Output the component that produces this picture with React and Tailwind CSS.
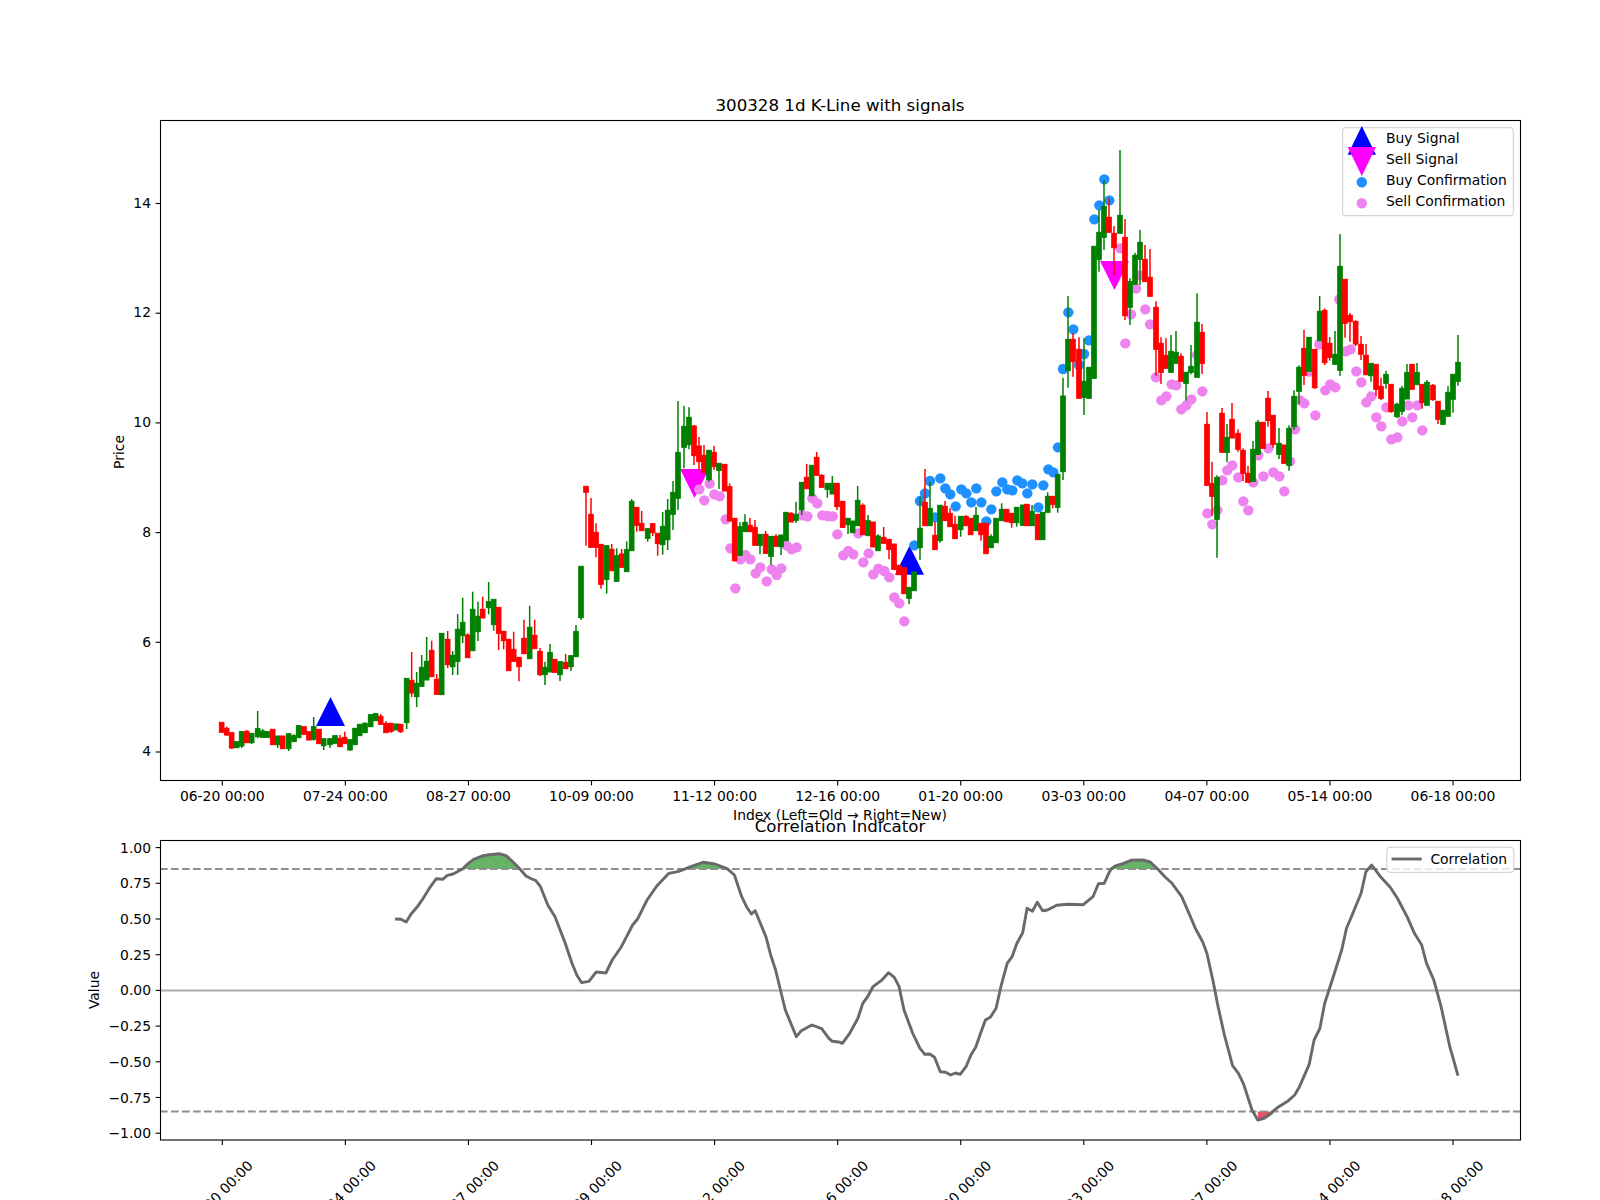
import React from 'react';

// candles read off the chart: [x, color, bodyTop, bodyBottom, wickTop, wickBottom]
const seg1 = [[215,'r',517,547],[230,'r',535,555,530,558],[245,'r',548,594,,597],[260,'g',575,593],[275,'g',545,588,,594],[290,'r',544,578,540],[305,'g',550,578,,582],[323,'g',536,560,483,565],[338,'g',543,562,537],[352,'g',545,562],[368,'r',538,584],[383,'g',558,584,,594],[398,'r',558,596],[416,'g',551,596,,603],[432,'g',557,575,553],[446,'g',527,563],[462,'r',530,553],[477,'r',545,570],[491,'g',530,568,501,572],[507,'r',538,581],[521,'g',566,587,,600],[540,'g',566,584,,594],[555,'g',557,580],[570,'r',565,590,555],[584,'r',562,581,545],[600,'g',569,600,,603],[615,'g',535,584],[629,'g',523,557],[645,'g',520,548,517],[662,'g',494,530],[677,'g',491,512,489],[692,'r',499,523,492],[708,'r',520,548,514],[723,'r',520,544,,548],[740,'g',522,540],[752,'r',523,545,,549],[770,'g',385,518,,537],[785,'r',391,429,306,441],[800,'g',400,440,366,471],[815,'g',352,409,315],[830,'g',334,390,261],[845,'r',301,380,272],[860,'r',388,433,372],[875,'g',250,434],[893,'r',268,344,243,354],[908,'g',316,350,303,375],[923,'g',238,334,192,375],[938,'g',217,257,143,279],[953,'r',255,323,250],[968,'g',178,302,125],[984,'g',199,245,155,273],[998,'r',178,204,140],[1016,'g',155,173,96,193],[1031,'g',148,224,,242],[1046,'r',172,250,,300],[1061,'r',244,272,,298],[1076,'r',268,362],[1091,'r',298,334,245],[1107,'r',322,350,,394],[1122,'r',265,311,209],[1139,'g',232,326,167],[1154,'r',256,296,209],[1170,'r',304,374,294,378],[1185,'g',352,374,335,405],[1200,'g',307,366,282],[1214,'r',328,367],[1230,'g',335,374,,393],[1247,'r',337,356,312],[1263,'g',317,350,,363],[1278,'g',244,320,225],[1293,'g',49,203,,210]];
const seg2 = [[78,'r',319,337,,497],[93,'r',403,502,354],[108,'r',457,502,430,532],[123,'r',493,613,,626],[140,'g',497,598,,641],[155,'r',508,572,492],[170,'g',527,604,505],[185,'r',522,562,507],[200,'g',509,575,484],[215,'g',364,512,357],[230,'r',382,436,,455],[245,'r',430,452,393],[263,'g',446,475,,485],[278,'r',431,458,,468],[293,'r',460,491,,527],[308,'g',439,494,396,524],[323,'g',391,479,357,510],[339,'g',337,403,303,450],[354,'g',217,355,63,390],[372,'g',139,202,78,265],[387,'g',112,194,82,208],[402,'r',138,227,135,255],[417,'r',198,245,171,270],[432,'r',226,278,195],[447,'g',211,299,,305],[462,'r',217,260,198,270],[477,'g',250,271,,327],[494,'r',253,333],[509,'r',320,423,310],[524,'r',415,542,,545],[540,'g',440,526,427],[555,'g',427,455,403],[570,'r',436,455,414],[585,'r',442,496,420],[600,'g',463,496,,523],[617,'r',463,520,453],[633,'g',469,529,,555],[648,'r',469,499,463],[663,'g',465,500,,525],[678,'g',397,482],[693,'r',400,426,397],[708,'g',403,421,366,429],[725,'g',307,390,,405],[740,'r',292,326,252],[755,'g',256,347],[770,'r',232,286,216],[785,'r',286,322,282],[802,'g',310,328,,353],[817,'g',310,342,288],[831,'r',310,380,,390],[848,'r',364,442],[864,'g',415,434,,462],[878,'g',423,458],[893,'g',361,437,318],[908,'r',376,464,370],[924,'g',422,467,405],[939,'r',426,501],[954,'g',468,512,463],[971,'r',472,490,441],[987,'r',478,508,,538],[1002,'r',492,568],[1017,'r',556,584],[1032,'r',563,641],[1047,'g',622,655,,672],[1062,'g',576,632]];
const seg3 = [[120,'g',1195,1253,1100,1290],[135,'r',1117,1187,1017],[150,'g',1135,1187,1055],[165,'r',1216,1259,1175],[180,'g',1126,1232,,1238],[195,'r',1129,1172,1113],[210,'r',1150,1190,1135],[225,'r',1183,1226,1157],[242,'g',1159,1199,,1220],[258,'r',1159,1187,1156],[272,'r',1165,1214],[288,'g',1156,1202,1130],[303,'r',1180,1214,,1232],[318,'r',1180,1271],[333,'g',1220,1253,1213],[348,'g',1165,1238],[365,'g',1138,1172,1120],[380,'r',1138,1175],[395,'r',1150,1178,,1193],[410,'g',1132,1178,,1190],[428,'g',1125,1186],[441,'r',1123,1187],[456,'g',1144,1187,1125],[473,'r',1153,1229],[488,'g',1147,1229],[503,'g',1099,1147,1087],[518,'r',1099,1123,,1135],[533,'g',1033,1132,,1148],[549,'g',798,1025,743,1050],[564,'g',628,722,498,773],[579,'r',628,695,610,740],[597,'r',658,805,622],[612,'g',754,802,625,855],[627,'g',712,805],[642,'g',349,745],[657,'g',307,389,240,425],[672,'g',229,322,150,360],[687,'r',262,307,205],[702,'r',310,353,288,438],[720,'g',256,310,60],[735,'r',322,557,267,570],[750,'g',455,532,445,585],[765,'g',376,463,368],[780,'g',337,388,300,465],[795,'r',388,455,345],[810,'r',442,499,357],[828,'r',532,658,514,737],[843,'r',640,727,622,762],[858,'r',676,715,625],[873,'g',664,727,615],[888,'g',667,700,603],[903,'r',679,754,670],[918,'g',727,760,,812],[933,'g',709,727,645,733],[951,'g',577,742,490],[966,'r',607,700,582,732]];
const seg4 = [[81,'r',613,796,576],[96,'r',790,829,726,888],[111,'g',772,898,766,1013],[126,'r',580,697,564],[141,'g',652,697,612,727],[156,'r',598,654,549],[174,'r',640,688,628,695],[189,'r',691,760,685,783],[204,'r',760,787,738],[219,'g',688,784,663],[234,'g',607,703,600],[249,'r',607,685],[264,'r',535,602,513,620],[279,'r',586,673,,683],[297,'g',670,703,624,717],[312,'r',675,730],[327,'g',625,736,616,752],[342,'g',529,620,511,630],[357,'g',442,514,436,552],[372,'r',385,466,330,495],[387,'g',352,454],[404,'r',388,503,,507],[419,'g',274,362,228],[434,'r',271,428,265,435],[449,'r',370,412,351,422],[465,'g',403,433,333],[480,'g',139,451,42,467],[495,'r',178,310,,353],[510,'r',286,305,279,365],[527,'r',304,372,301,378],[543,'r',373,403,348,420],[558,'r',406,464,372],[573,'g',430,467,,485],[588,'r',433,508,,527],[603,'r',499,535,473,540],[618,'g',463,490,452,506],[633,'r',493,575,,578],[651,'g',553,590,548,594],[666,'g',505,574,498,585],[681,'g',457,537,432],[696,'r',433,508,432],[711,'g',457,494,429],[726,'r',493,548,,566],[741,'g',487,556,480],[759,'r',496,539,492,542],[774,'r',544,598,,612],[789,'g',571,613],[804,'g',517,589,498],[819,'g',463,538,,578],[834,'g',427,484,345,497]];

const place = (rows, ox, oy) => rows.map(([x, c, t, b, hi = t, lo = b]) => ({ x: ox + x / 3, c, t: oy + t / 3, b: oy + b / 3, hi: oy + hi / 3, lo: oy + lo / 3 }));
const candles = [...place(seg1, 150, 550), ...place(seg2, 560, 380), ...place(seg3, 880, 130), ...place(seg4, 1180, 220)];

const dots = (pts, ox, oy) => pts.map(([x, y]) => [ox + x / 3, oy + y / 3]);
const sellDots = [
  ...dots([[418,328],[449,311],[433,361],[463,343],[479,349],[497,418],[511,505],[526,625],[541,538],[556,525],[571,538],[587,580],[601,562],[620,604],[635,568],[650,585],[664,565],[680,496],[695,508],[710,502],[727,406],[742,409],[757,355],[772,370],[787,406],[803,408],[818,409],[832,463],[850,526],[865,513],[880,523],[895,460],[910,547],[926,520],[940,583],[955,566],[973,573],[988,592],[1003,652],[1018,670],[1033,724]], 560, 380),
  ...dots([[721,355],[768,476],[780,436],[753,553],[736,640],[796,538],[810,583],[828,742],[875,763],[889,766],[844,811],[859,799],[904,838],[919,826],[934,808],[967,784],[951,675]], 880, 130),
  ...dots([[82,880],[97,913],[112,871],[127,781],[142,751],[157,736],[175,772],[190,844],[205,871],[220,787],[235,706],[250,769],[265,685],[280,757],[298,769],[313,814],[330,724],[345,628],[360,541],[373,550],[388,455],[406,586],[418,373],[436,511],[451,493],[466,502],[478,238],[497,394],[512,388],[529,454],[544,487],[559,547],[574,529],[589,592],[604,619],[619,562],[634,658],[652,652],[667,604],[685,556],[697,592],[712,556],[727,631]], 1180, 220),
];
const buyDots = dots([[103,1246],[120,1113],[135,1090],[150,1053],[165,1162],[181,1045],[196,1075],[211,1093],[227,1129],[244,1078],[259,1090],[274,1117],[289,1075],[304,1117],[319,1174],[334,1138],[349,1084],[367,1057],[382,1078],[397,1081],[412,1051],[427,1060],[442,1090],[457,1063],[475,1132],[490,1066],[505,1018],[520,1027],[534,952],[549,717],[565,547],[580,598],[597,705],[612,672],[627,631],[658,226],[643,268],[673,148],[688,211]], 880, 130);

const corrA = [[650,387],[662,388],[673,396],[683,372],[695,352],[708,325],[722,292],[735,266],[748,268],[758,256],[770,252],[785,240],[790,236],[798,224],[812,208],[832,197],[845,194],[865,191],[880,198],[895,218],[907,236],[920,258],[932,267],[940,271],[950,290],[965,345],[980,380],[1000,455],[1015,520],[1025,555],[1035,578],[1050,574],[1065,546],[1085,549],[1098,510],[1117,470],[1140,405],[1150,388],[1170,330],[1190,288],[1215,250],[1235,244],[1250,236],[1260,230],[1285,217],[1310,222],[1335,236],[1350,255],[1365,320],[1375,350],[1385,372],[1393,362],[1415,440],[1425,495],[1435,540],[1455,660],[1478,740],[1488,722],[1510,705],[1530,716],[1545,745],[1552,754],[1568,757]];
const corrB = [[5,760],[20,730],[37,685],[47,640],[57,620],[68,590],[85,572],[100,548],[112,562],[122,590],[132,660],[150,730],[165,775],[175,793],[185,792],[195,802],[207,845],[218,847],[228,855],[238,849],[248,853],[260,830],[270,795],[280,772],[290,730],[300,690],[310,682],[322,655],[332,590],[345,520],[355,500],[365,460],[377,428],[386,355],[397,364],[407,337],[418,362],[428,360],[447,346],[470,343],[502,344],[522,320],[533,281],[545,280],[556,245],[560,236],[568,228],[585,220],[600,211],[625,210],[640,216],[655,236],[670,260],[685,280],[705,320],[720,370],[733,415],[748,455],[757,490],[770,575],[780,650],[793,735],[810,827],[822,850],[832,880],[850,960],[862,990],[875,985],[890,970],[893,964],[905,950],[925,932],[938,915],[948,890],[968,823],[978,750],[990,715],[1000,640],[1020,550],[1035,480],[1045,415],[1055,380],[1075,310],[1085,245],[1097,225],[1115,260],[1135,292],[1150,325],[1170,380],[1185,430],[1200,465],[1210,520],[1225,570],[1240,650],[1258,770],[1275,857]];
const toPx = (rows, ox) => rows.map(([x, y]) => [ox + x / 2.063, 790 + y / 3]);
const corr = [...toPx(corrA, 80), ...toPx(corrB, 840)];

const UPPER = 869;
const LOWER = 1111.5;

const pointStr = (pts) => pts.map(([x, y]) => `${x.toFixed(1)},${y.toFixed(1)}`).join(' ');

const runs = (test) => {
  const out = [];
  let cur = [];
  corr.forEach((p) => {
    if (test(p[1])) cur.push(p);
    else if (cur.length) { out.push(cur); cur = []; }
  });
  if (cur.length) out.push(cur);
  return out;
};

const tickX = (i) => 222.3 + 123.07 * i;
const dates = ['06-20', '07-24', '08-27', '10-09', '11-12', '12-16', '01-20', '03-03', '04-07', '05-14', '06-18'];
const prices = [4, 6, 8, 10, 12, 14];
const values = [['1.00', 1], ['0.75', 0.75], ['0.50', 0.5], ['0.25', 0.25], ['0.00', 0], ['−0.25', -0.25], ['−0.50', -0.5], ['−0.75', -0.75], ['−1.00', -1]];
const priceY = (p) => 752 - (p - 4) * 54.85;
const valueY = (v) => 990.4 - v * 142.8;

const Candles = () => candles.map((k, i) => {
  const color = k.c === 'r' ? 'fill-[#ff0000] stroke-[#ff0000]' : 'fill-[#008000] stroke-[#008000]';
  return (
    <g key={i} className={color}>
      <line x1={k.x} x2={k.x} y1={k.hi} y2={k.lo} strokeWidth="1.5" />
      <rect x={k.x - 2.3} y={k.t} width="4.6" height={k.b - k.t} strokeWidth="1" />
    </g>
  );
});

const Frame = ({ x, y, w, h }) => <rect x={x} y={y} width={w} height={h} fill="none" className="stroke-black" strokeWidth="1.1" />;

const PriceChart = () => (
  <svg viewBox="0 120 1600 697" className="block w-[1600px] h-[697px] overflow-visible text-[13.9px] fill-black">
    <polygon points="316,726 345,726 330.5,697" className="fill-[#0000ff]" />
    <polygon points="895,574.7 924,574.7 909.5,545.7" className="fill-[#0000ff]" />
    <polygon points="680,469 709,469 694.5,498" className="fill-[#ff00ff]" />
    <polygon points="1100,261 1129,261 1114.5,290" className="fill-[#ff00ff]" />
    {buyDots.map(([x, y], i) => <circle key={i} cx={x} cy={y} r="5.2" className="fill-[#1e90ff]" />)}
    {sellDots.map(([x, y], i) => <circle key={i} cx={x} cy={y} r="5.2" className="fill-[#ee82ee]" />)}
    <Candles />

    <Frame x={160.5} y={120.5} w={1360} h={660} />
    {dates.map((d, i) => (
      <g key={d}>
        <line x1={tickX(i)} x2={tickX(i)} y1="780.5" y2="785.4" className="stroke-black" strokeWidth="1.1" />
        <text x={tickX(i)} y="801" textAnchor="middle">{d} 00:00</text>
      </g>
    ))}
    {prices.map((p) => (
      <g key={p}>
        <line x1="155.6" x2="160.5" y1={priceY(p)} y2={priceY(p)} className="stroke-black" strokeWidth="1.1" />
        <text x="151" y={priceY(p) + 4.2} textAnchor="end">{p}</text>
      </g>
    ))}
    <text x="840" y="820" textAnchor="middle">Index (Left=Old → Right=New)</text>
    <text transform="translate(124 452) rotate(-90)" textAnchor="middle">Price</text>

    <rect x="1342.7" y="127.7" width="170.6" height="88" rx="3" strokeWidth="1" className="fill-white/80 stroke-[#cccccc]" />
    <polygon points="1347.7,154.7 1376,154.7 1361.8,126" className="fill-[#0000ff]" />
    <polygon points="1347.7,147 1376,147 1361.8,176" className="fill-[#ff00ff]" />
    <circle cx="1361.8" cy="182.3" r="5.2" className="fill-[#1e90ff]" />
    <circle cx="1361.8" cy="203.3" r="5.2" className="fill-[#ee82ee]" />
    <text x="1386" y="143">Buy Signal</text>
    <text x="1386" y="164">Sell Signal</text>
    <text x="1386" y="185">Buy Confirmation</text>
    <text x="1386" y="206">Sell Confirmation</text>
  </svg>
);

const CorrChart = () => (
  <svg viewBox="0 841 1600 359" className="block w-[1600px] h-[359px] overflow-visible text-[13.9px] fill-black">
    {runs((y) => y <= UPPER).map((r, i) => (
      <polygon key={i} points={pointStr([...r, [r[r.length - 1][0], UPPER], [r[0][0], UPPER]])} className="fill-[#66b366]" />
    ))}
    {runs((y) => y >= LOWER).map((r, i) => (
      <polygon key={i} points={pointStr([...r, [r[r.length - 1][0], LOWER], [r[0][0], LOWER]])} className="fill-[#ee4d6a]" />
    ))}
    <line x1="160" x2="1520" y1={UPPER} y2={UPPER} strokeWidth="2" strokeDasharray="7.7 3.3" className="stroke-[#8f8f8f]" />
    <line x1="160" x2="1520" y1={LOWER} y2={LOWER} strokeWidth="2" strokeDasharray="7.7 3.3" className="stroke-[#8f8f8f]" />
    <line x1="160" x2="1520" y1={990.4} y2={990.4} strokeWidth="2" className="stroke-[#aaaaaa]" />
    <polyline points={pointStr(corr)} fill="none" strokeWidth="2.9" strokeLinejoin="round" className="stroke-[#696969]" />

    <Frame x={160.5} y={840.5} w={1360} h={299.5} />
    {dates.map((d, i) => (
      <g key={d}>
        <line x1={tickX(i)} x2={tickX(i)} y1="1140" y2="1145" className="stroke-black" strokeWidth="1.1" />
        <text transform={`translate(${tickX(i) - 2} 1193) rotate(-45)`} textAnchor="middle" dominantBaseline="central">{d} 00:00</text>
      </g>
    ))}
    {values.map(([label, v]) => (
      <g key={label}>
        <line x1="155.6" x2="160.5" y1={valueY(v)} y2={valueY(v)} className="stroke-black" strokeWidth="1.1" />
        <text x="151" y={valueY(v) + 5} textAnchor="end">{label}</text>
      </g>
    ))}
    <text transform="translate(99 990) rotate(-90)" textAnchor="middle">Value</text>

    <rect x="1386.8" y="847.3" width="127" height="25" rx="3" strokeWidth="1" className="fill-white/80 stroke-[#cccccc]" />
    <line x1="1391.6" x2="1421.7" y1="859" y2="859" strokeWidth="2.9" className="stroke-[#696969]" />
    <text x="1430.4" y="863.6">Correlation</text>
  </svg>
);

const App = () => {
  return (
    <div className="w-[1600px] h-[1200px] bg-white overflow-hidden pt-[94px] font-['DejaVu_Sans',sans-serif]">
      <h2 className="pl-[160px] w-[1520px] h-[26px] text-center text-[16.67px] leading-[24px] text-black">300328 1d K-Line with signals</h2>
      <PriceChart />
      <h2 className="pl-[160px] w-[1520px] h-[24px] text-center text-[16.67px] leading-[20px] text-black">Correlation Indicator</h2>
      <CorrChart />
    </div>
  );
};

export default App;
